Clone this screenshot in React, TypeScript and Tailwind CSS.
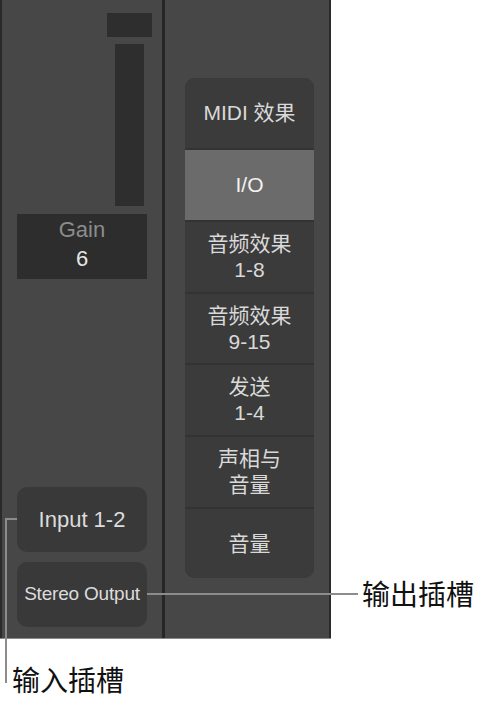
import React from "react";

const rows: { lines: string[]; h: string; selected?: boolean }[] = [
  { lines: ["MIDI 效果"], h: "h-[70px]" },
  { lines: ["I/O"], h: "h-[70px]", selected: true },
  { lines: ["音频效果", "1-8"], h: "h-[70px]" },
  { lines: ["音频效果", "9-15"], h: "h-[69px]" },
  { lines: ["发送", "1-4"], h: "h-[70px]" },
  { lines: ["声相与", "音量"], h: "h-[70px]" },
  { lines: ["音量"], h: "h-[69px]" },
];

export default function App() {
  const ui = { fontFamily: '"Liberation Sans", "Noto Sans CJK SC", sans-serif' };
  const cjk = { fontFamily: '"Noto Sans CJK SC", "Noto Sans", sans-serif' };
  return (
    <div className="relative w-[487px] h-[705px] bg-white overflow-hidden" style={ui}>
      <div className="flex w-[331px] h-[639px] bg-[#474747] border-b border-[#8a8a8a]">
        {/* left column */}
        <div className="w-[162px] h-full border-l-2 border-[#2a2a2a] flex flex-col">
          <div className="ml-[105px] mt-[13px] w-[45px] h-[24px] bg-[#2e2e2e]" />
          <div className="ml-[113px] mt-[7px] w-[29px] h-[162px] bg-[#2e2e2e]" />
          <div className="ml-[15px] mt-[8px] w-[130px] h-[65px] bg-[#2d2d2d] flex flex-col items-center text-[22px] leading-[29px] pt-[1px]">
            <span className="text-[#8c8c8c]">Gain</span>
            <span className="text-[#e6e6e6]">6</span>
          </div>
          <div className="flex-1" />
          <div className="ml-[15px] w-[130px] h-[65px] rounded-[10px] bg-[#393939] flex items-center justify-center text-[22px] text-[#dcdcdc]">
            Input 1-2
          </div>
          <div className="ml-[15px] mt-[10px] mb-[11px] w-[130px] h-[65px] rounded-[10px] bg-[#393939] flex items-center justify-center text-[19px] tracking-[-0.2px] text-[#dcdcdc]">
            Stereo Output
          </div>
        </div>
        {/* divider */}
        <div className="w-[3px] h-full bg-[#262626]" />
        {/* right column */}
        <div className="flex-1 h-full border-r-2 border-[#2a2a2a]">
          <div className="ml-[20px] mt-[78px] w-[129px] rounded-[10px] overflow-hidden bg-[#333333] flex flex-col gap-[2px]">
            {rows.map((r, i) => (
              <div
                key={i}
                className={`${r.h} flex flex-col items-center justify-center text-[21px] leading-[26px] ${
                  r.selected ? "bg-[#6b6b6b] text-[#f2f2f2]" : "bg-[#3b3b3b] text-[#d9d9d9]"
                }`}
              >
                {r.lines.map((l, j) => (
                  <span key={j}>{l}</span>
                ))}
              </div>
            ))}
          </div>
        </div>
      </div>

      {/* callout: input slot */}
      <div className="absolute left-[5px] top-[518px] w-[12px] h-[2px] bg-[#8c8c8c]" />
      <div className="absolute left-[5px] top-[518px] w-[2px] h-[165px] bg-[#8c8c8c]" />
      <div className="absolute left-[12px] top-[663px] text-[28px] leading-[32px] text-[#111]" style={cjk}>
        输入插槽
      </div>

      {/* callout: output slot */}
      <div className="absolute left-[147px] top-[593px] w-[211px] h-[2px] bg-[#8c8c8c]" />
      <div className="absolute left-[362px] top-[577px] text-[28px] leading-[32px] text-[#111]" style={cjk}>
        输出插槽
      </div>
    </div>
  );
}
